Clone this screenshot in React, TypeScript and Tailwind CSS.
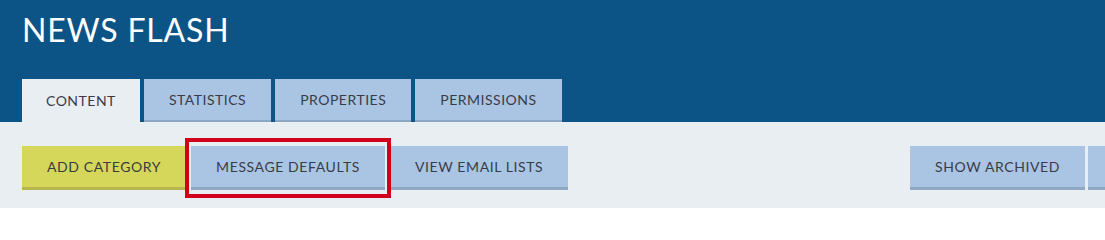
import React from "react";

const font = { fontFamily: '"Lato", "Open Sans", "Liberation Sans", sans-serif' };

const tabs = ["CONTENT", "STATISTICS", "PROPERTIES", "PERMISSIONS"];

function Tab({ label, active }: { label: string; active?: boolean }) {
  return (
    <div
      className={
        active
          ? "h-[43px] px-[24px] flex items-center bg-[#e9eef2] text-[14px] tracking-[0.5px] text-[#3b3b47]"
          : "h-[43px] px-[25px] flex items-center bg-[#a9c5e3] border-b-2 border-[#8aa6c5] text-[14px] tracking-[0.5px] text-[#3b3b47]"
      }
    >
      {label}
    </div>
  );
}

function ToolButton({ label, yellow, className = "" }: { label?: string; yellow?: boolean; className?: string }) {
  return (
    <button
      className={
        (yellow
          ? "h-[44px] px-[25px] shrink-0 bg-[#d5d75b] border-b-[3px] border-[#b5b74c] text-[14px] tracking-[0.6px] text-[#3b3b3b] whitespace-nowrap "
          : "h-[44px] px-[25px] shrink-0 bg-[#a9c5e3] border-b-[3px] border-[#8fa8c4] text-[14px] tracking-[0.6px] text-[#3b3b47] whitespace-nowrap ") +
        className
      }
    >
      {label}
    </button>
  );
}

export default function App() {
  return (
    <div className="w-[1105px] h-[208px] overflow-hidden bg-[#e9eef2]" style={font}>
      <div className="bg-[#0c5486] pt-[12px] px-[22px]">
        <h1 className="text-[32px] leading-[36px] tracking-[0.8px] text-white font-normal">NEWS FLASH</h1>
        <div className="flex gap-[4px] mt-[31px]">
          {tabs.map((t, i) => (
            <Tab key={t} label={t} active={i === 0} />
          ))}
        </div>
      </div>
      <div className="flex pt-[24px] px-[22px]">
        <div className="flex gap-[5px] items-start">
          <ToolButton label="ADD CATEGORY" yellow />
          <div className="relative">
            <ToolButton label="MESSAGE DEFAULTS" />
            <div className="absolute -left-[6px] -right-[6px] -top-[8px] -bottom-[8px] border-4 border-[#d0021b] pointer-events-none" />
          </div>
          <ToolButton label="VIEW EMAIL LISTS" />
        </div>
        <div className="flex gap-[3px] ml-auto -mr-[22px] pl-[20px]">
          <ToolButton label="SHOW ARCHIVED" />
          <ToolButton className="w-[17px] !px-0" />
        </div>
      </div>
    </div>
  );
}
